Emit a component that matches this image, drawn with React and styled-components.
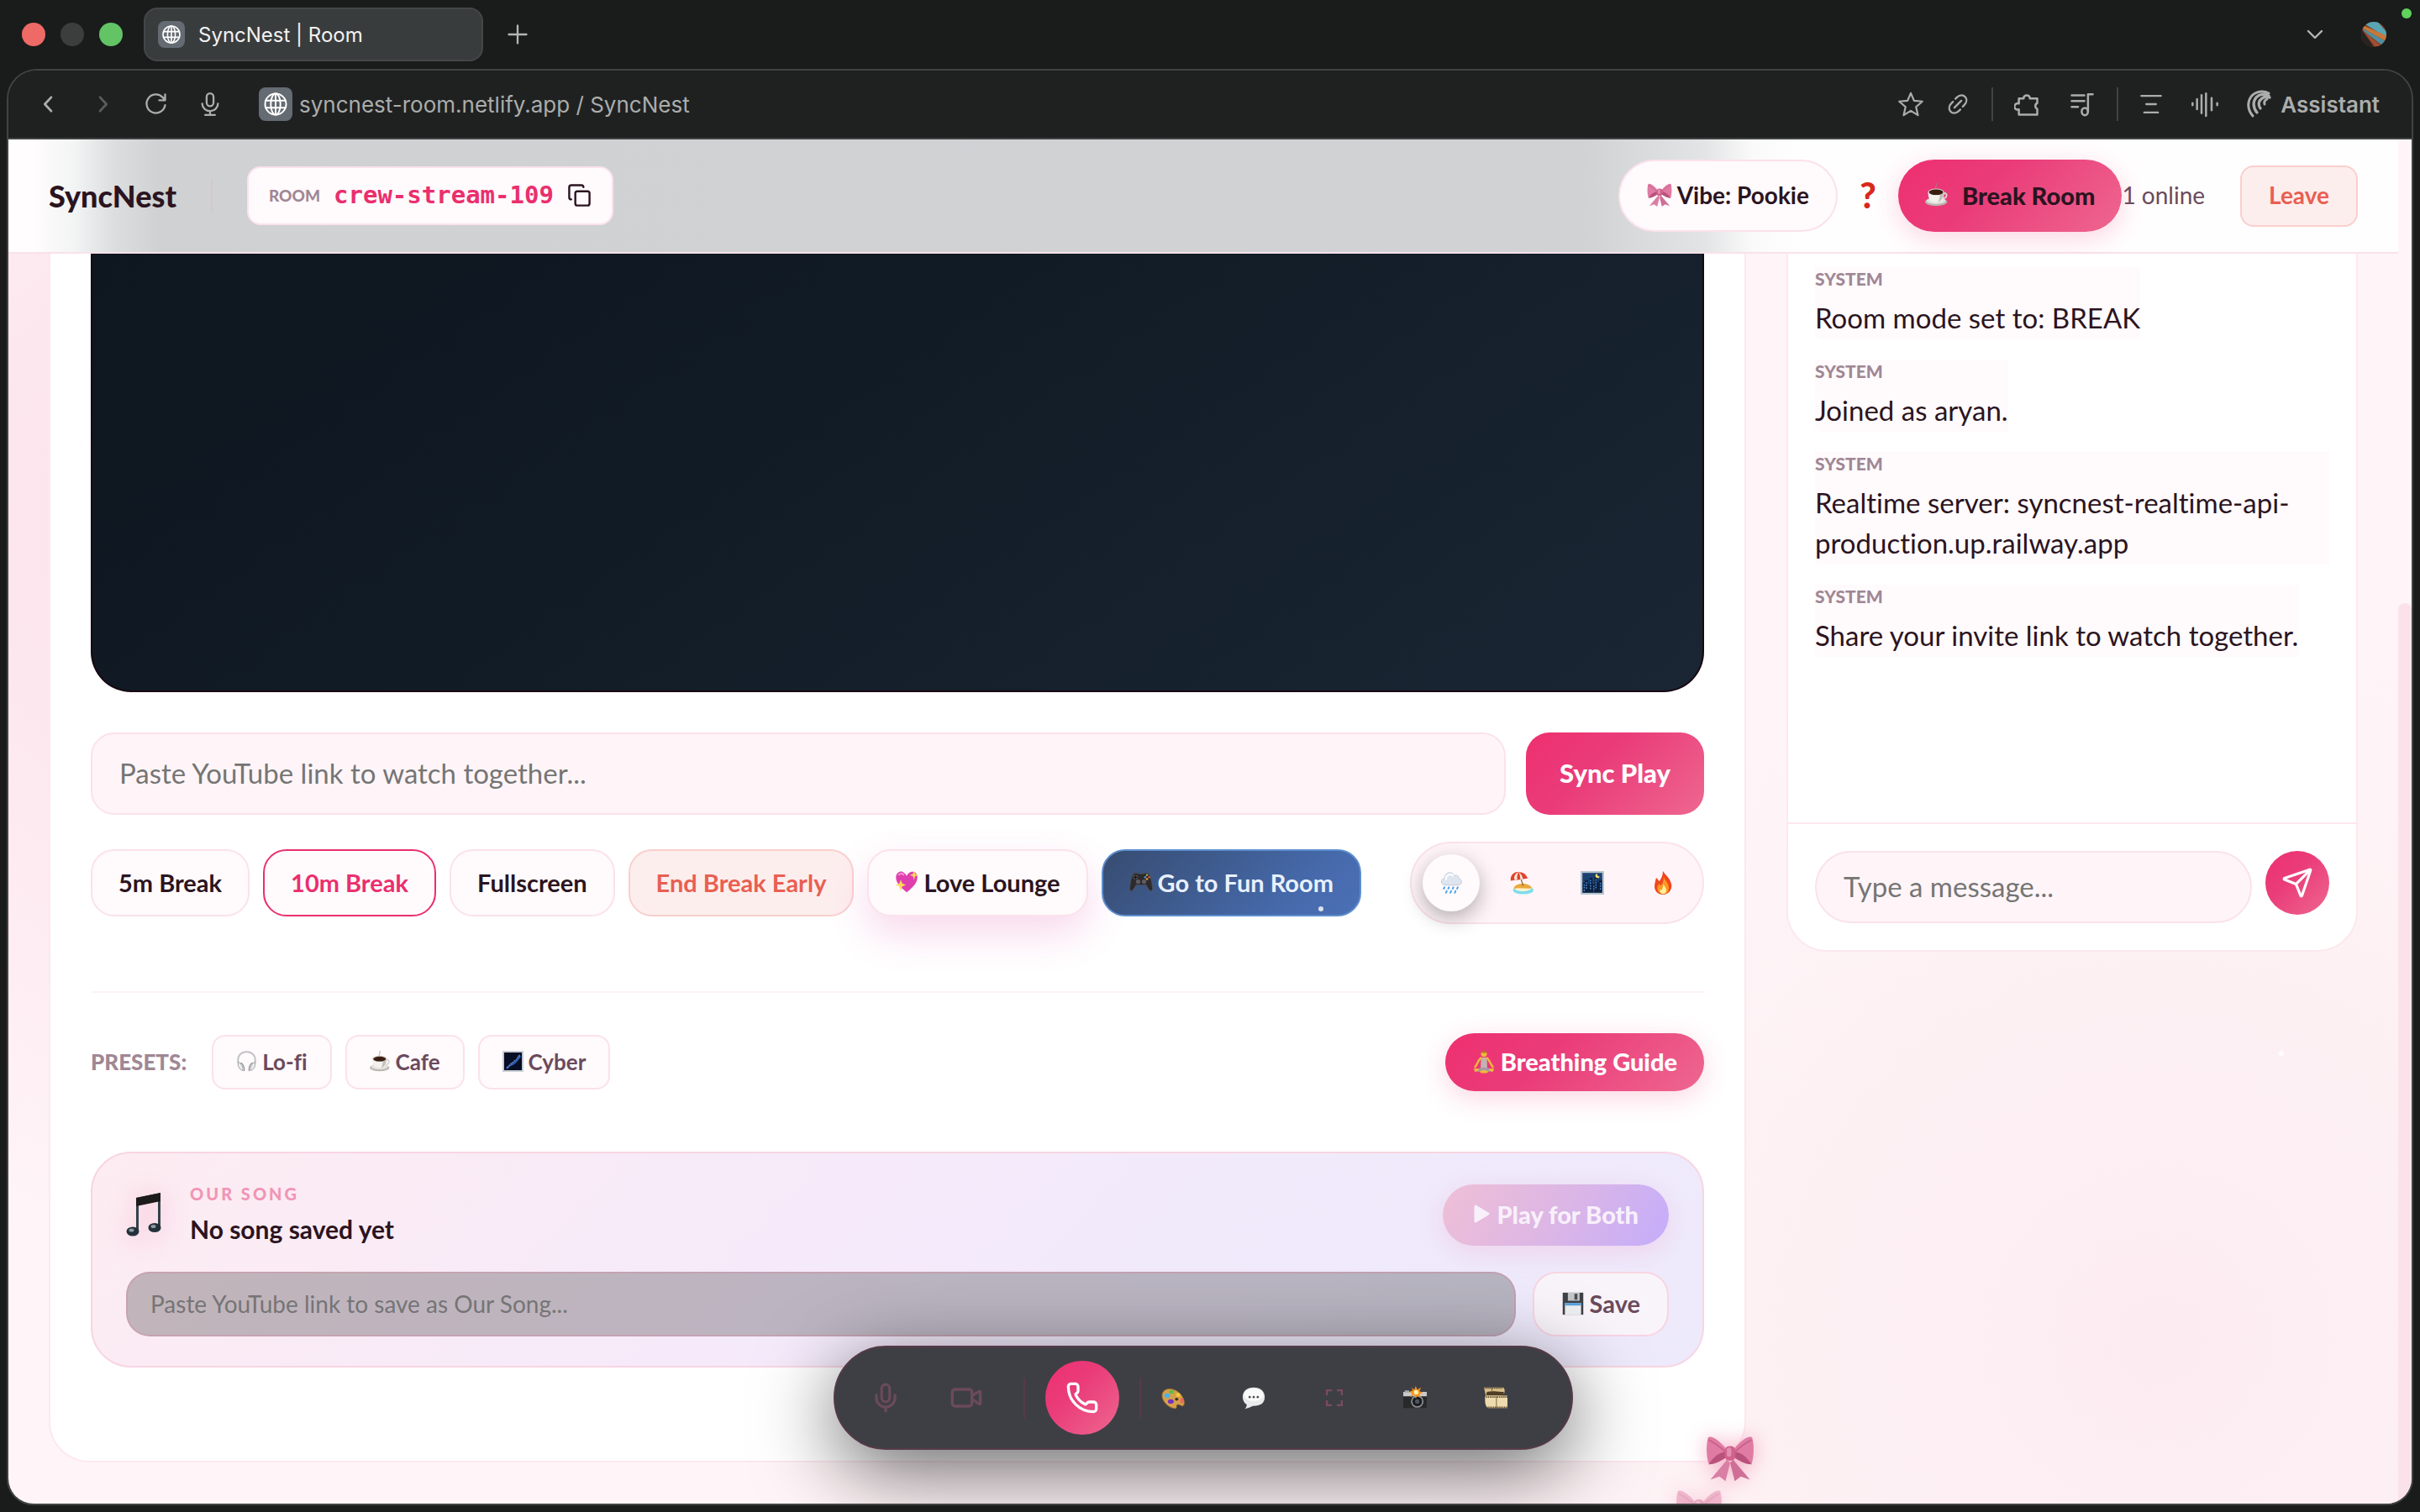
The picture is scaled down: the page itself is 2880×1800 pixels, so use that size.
import React from 'react';
import styled, { createGlobalStyle, css } from 'styled-components';
import { Mic, Video, Phone, Send, Copy } from 'lucide-react';

const ui = '"Lato", "Open Sans", sans-serif';
const chrome = '"Inter", "Liberation Sans", sans-serif';
const ink = '#2b1420';
const soft = '#6b4a5c';
const muted = '#a08794';
const pinkLine = '#fbe2ea';
const hot = 'linear-gradient(135deg, #ee2f70 0%, #ea3c79 40%, #ee6790 100%)';

const Global = createGlobalStyle`
  *, *::before, *::after { box-sizing: border-box; }
  body { margin: 0; background: #1a1c1b; font-family: ${ui}; color: ${ink}; font-variant-ligatures: none; }
  button, input { font-family: inherit; font-variant-ligatures: none; margin: 0; }
  button { cursor: pointer; border: 0; background: none; padding: 0; color: inherit; }
  h1, h2, p { margin: 0; }
`;

/* ---------- browser window ---------- */

const Desktop = styled.div`
  display: flex;
  flex-direction: column;
  height: 100vh;
  padding: 0 8px 8px;
  overflow: hidden;
`;

const TabStrip = styled.div`
  display: flex;
  align-items: center;
  flex: 0 0 82px;
  padding: 0 31px 0 18px;
  font-family: ${chrome};
`;

const Lights = styled.div`
  display: flex;
  gap: 18px;
  margin-right: 25px;
`;

const Light = styled.span`
  width: 28px;
  height: 28px;
  border-radius: 50%;
  background: ${(p) => p.$color};
`;

const Tab = styled.button`
  display: flex;
  align-items: center;
  gap: 16px;
  width: 404px;
  height: 64px;
  padding: 0 15px;
  border: 2px solid #444747;
  border-radius: 16px;
  background: #393c3d;
  color: #f2f2f2;
  font-size: 24px;
`;

const Favicon = styled.span`
  display: grid;
  place-items: center;
  width: ${(p) => p.$size}px;
  height: ${(p) => p.$size}px;
  border-radius: 8px;
  background: #646b72;
  color: #fff;
`;

const StripButton = styled.button`
  display: grid;
  place-items: center;
  width: 32px;
  height: 32px;
  color: #b4b6b5;
`;

const NewTab = styled(StripButton)`
  margin: 0 auto 0 25px;
`;

const ChevronButton = styled(StripButton)`
  margin-right: 38px;
`;

const RecordingDot = styled.span`
  position: absolute;
  top: 10px;
  right: 10px;
  width: 12px;
  height: 12px;
  border-radius: 50%;
  background: #5fd35b;
`;

const Frame = styled.div`
  display: flex;
  flex-direction: column;
  flex: 1;
  min-height: 0;
  border: 2px solid #414343;
  border-radius: 36px 36px 32px 32px;
  overflow: hidden;
`;

const Toolbar = styled.div`
  display: flex;
  align-items: center;
  flex: 0 0 82px;
  padding: 0 38px 0 34px;
  border-bottom: 2px solid #414343;
  background: #1f2121;
  color: #abadac;
  font-family: ${chrome};
  font-size: 26px;
`;

const ToolGroup = styled.div`
  display: flex;
  align-items: center;
  gap: ${(p) => p.$gap}px;
`;

const ToolButton = styled.button`
  display: grid;
  place-items: center;
  color: ${(p) => (p.$dim ? '#5b5d5d' : 'inherit')};
`;

const Address = styled.div`
  display: flex;
  align-items: center;
  gap: 8px;
  margin: 0 auto 0 44px;
`;

const ToolRule = styled.span`
  width: 2px;
  height: 40px;
  margin: 0 25px 0 26px;
  background: #414343;
`;

const AssistantButton = styled.button`
  display: flex;
  align-items: center;
  gap: 10px;
  font-size: 26px;
  font-weight: 600;
`;

/* ---------- page ---------- */

const Viewport = styled.div`
  position: relative;
  display: flex;
  flex: 1;
  min-height: 0;
`;

const Page = styled.div`
  position: relative;
  display: flex;
  flex-direction: column;
  flex: 1;
  min-width: 0;
  overflow: hidden;
  background:
    radial-gradient(circle 900px at 90% 88%, #fcecf2 0%, #fdf1f4 55%, rgba(255, 245, 248, 0) 100%),
    radial-gradient(circle 900px at 10% 28%, #fbdfe9 0%, rgba(255, 245, 248, 0) 100%),
    #fff5f8;
`;

const Scrollbar = styled.div`
  display: flex;
  flex: 0 0 16px;
  flex-direction: column;
  justify-content: flex-end;
  background: #fff5f8;
`;

const Thumb = styled.div`
  height: 66%;
  border-radius: 8px 8px 0 0;
  background: ${pinkLine};
`;

const Header = styled.header`
  display: flex;
  align-items: center;
  flex: 0 0 136px;
  padding: 10px 48px;
  border-bottom: 2px solid #f9e2ea;
  background: linear-gradient(90deg, #fffdfe 30px, #f3f4f4 78px, #dcdedf 125px, #cfd1d2 180px,
    #d0d2d4 66%, #e3e4e5 71%, #fafafa 73%, #fffefe 75%);
`;

const Logo = styled.h1`
  font-size: 36px;
  font-weight: 900;
  line-height: 40px;
`;

const HeaderRule = styled.span`
  width: 2px;
  height: 40px;
  margin: 0 41px;
  background: #d8c6cd;
`;

const RoomBox = styled.div`
  display: flex;
  align-items: center;
  gap: 16px;
  height: 70px;
  padding: 0 24px 2px;
  border: 2px solid ${pinkLine};
  border-radius: 16px;
  background: #fffafc;
`;

const RoomLabel = styled.span`
  color: ${muted};
  font-size: 19px;
  font-weight: 900;
`;

const RoomCode = styled.code`
  color: #ea2f6d;
  font: 700 29px "DejaVu Sans Mono", monospace;
`;

const HeaderEnd = styled.div`
  display: flex;
  align-items: center;
  margin-left: auto;
  font-size: 28px;
`;

const Pill = styled.button`
  display: flex;
  align-items: center;
  gap: ${(p) => (p.$hot ? 16 : 6)}px;
  height: 86px;
  padding: 0 32px 2px;
  border-radius: 43px;
  font-size: 28px;
  font-weight: 700;
  background: #fffafc;
  border: 2px solid ${pinkLine};
  ${(p) => p.$hot && css`
    border: 0;
    background: ${hot};
    font-size: 29px;
    font-weight: 900;
    box-shadow: 0 8px 32px rgba(236, 48, 112, 0.2);
  `}
`;

const Help = styled.button`
  width: 48px;
  margin: 0 12px;
  padding-bottom: 2px;
  color: #d9281c;
  font: 900 42px "Lato", sans-serif;
`;

const Online = styled.span`
  margin-right: 42px;
  padding-bottom: 2px;
  color: ${soft};
`;

const Leave = styled.button`
  height: 73px;
  padding: 0 32px 2px;
  border: 2px solid #f9cfcd;
  border-radius: 16px;
  background: #fdeeee;
  color: #e95f51;
  font-size: 28px;
  font-weight: 700;
`;

const Body = styled.div`
  display: grid;
  grid-template-columns: minmax(0, 1fr) 680px;
  align-items: start;
  gap: 48px;
  padding: 0 48px;
`;

const Panel = styled.section`
  border: 2px solid #fde8ee;
  border-top: 0;
  border-radius: 0 0 48px 48px;
  background: #fff;
`;

const Main = styled(Panel)`
  padding: 0 48px 111px;
`;

const Player = styled.div`
  height: 522px;
  border: 2px solid #180710;
  border-top: 0;
  border-radius: 0 0 48px 48px;
  background: linear-gradient(145deg, #0e161f 0%, #111b25 40%, #1a2634 100%);
`;

const LinkForm = styled.form`
  display: flex;
  gap: 24px;
  margin-top: 48px;
`;

const Field = styled.input`
  flex: 1;
  min-width: 0;
  height: 98px;
  padding: 0 32px 2px;
  border: 2px solid ${pinkLine};
  border-radius: 28px;
  background: #fff5f8;
  color: ${ink};
  font-size: 33px;
  outline: 0;
  &::placeholder { color: #757575; opacity: 1; }
`;

const SyncPlay = styled.button`
  height: 98px;
  padding: 0 40px 2px;
  border-radius: 28px;
  background: ${hot};
  color: #fff;
  font-size: 31px;
  font-weight: 900;
`;

const Controls = styled.div`
  display: flex;
  align-items: center;
  gap: 16px;
  margin-top: 32px;
`;

const tones = {
  plain: css`border-color: ${pinkLine}; background: #fffafc; color: ${ink};`,
  active: css`border-color: #ea2f6d; background: #fffafc; color: #ea2f6d;`,
  danger: css`border-color: #f9cfcd; background: #fdeeee; color: #e95f51;`,
  love: css`border-color: ${pinkLine}; background: #fffafc; color: ${ink}; box-shadow: 0 20px 48px rgba(222, 60, 160, 0.2);`,
  fun: css`border-color: #5e8fcf; background: linear-gradient(135deg, #374c70, #466aac 75%, #4c70b5); color: #e8f1ff;`,
};

const Control = styled.button`
  display: flex;
  align-items: center;
  gap: 6px;
  height: 80px;
  padding: 0 31px 2px;
  border: 2px solid;
  border-radius: 28px;
  font-size: 29px;
  font-weight: 700;
  white-space: nowrap;
  ${(p) => tones[p.$tone]}
`;

const Ambience = styled.div`
  display: flex;
  gap: 16px;
  margin-left: auto;
  padding: 13px;
  border: 2px solid ${pinkLine};
  border-radius: 49px;
  background: #fff5f8;
`;

const AmbienceButton = styled.button`
  display: grid;
  place-items: center;
  width: 68px;
  height: 68px;
  border-radius: 50%;
  ${(p) => p.$on && css`background: #fffafc; box-shadow: 0 8px 24px rgba(0, 0, 0, 0.3);`}
`;

const PresetRow = styled.div`
  display: flex;
  align-items: center;
  gap: 16px;
  margin-top: 80px;
  padding-top: 48px;
  border-top: 2px solid #fff2f6;
`;

const PresetLabel = styled.span`
  margin-right: 14px;
  padding-bottom: 2px;
  color: ${muted};
  font-size: 26px;
  font-weight: 900;
`;

const Preset = styled.button`
  display: flex;
  align-items: center;
  gap: 6px;
  height: 65px;
  padding: 0 27px 2px;
  border: 2px solid ${pinkLine};
  border-radius: 16px;
  background: #fffafc;
  color: ${soft};
  font-size: 26px;
  font-weight: 700;
`;

const Breathing = styled.button`
  display: flex;
  align-items: center;
  gap: 6px;
  height: 69px;
  margin-left: auto;
  padding: 0 32px 2px;
  border-radius: 35px;
  background: ${hot};
  box-shadow: 0 8px 32px rgba(236, 48, 112, 0.2);
  color: #fff;
  font-size: 29px;
  font-weight: 900;
`;

const SongCard = styled.div`
  display: flex;
  flex-direction: column;
  gap: 26px;
  margin-top: 72px;
  padding: 31px 40px 35px;
  border: 2px solid #f8d5e2;
  border-radius: 48px;
  background: linear-gradient(135deg, #fdecf1 0%, #f6eafa 42%, #f1eafb 65%, #edeafc 100%);
`;

const SongTop = styled.div`
  display: flex;
  align-items: center;
  gap: 32px;
`;

const NoteGlow = styled.span`
  display: grid;
  filter: drop-shadow(0 4px 16px rgba(236, 48, 112, 0.35));
`;

const SongLabel = styled.p`
  color: #f195b5;
  font-size: 20px;
  font-weight: 900;
  line-height: 34px;
  letter-spacing: 3px;
`;

const SongTitle = styled.h2`
  font-size: 30px;
  font-weight: 700;
  line-height: 50px;
`;

const PlayBoth = styled.button`
  display: flex;
  align-items: center;
  gap: 8px;
  height: 73px;
  margin-left: auto;
  padding: 0 36px 2px;
  border-radius: 37px;
  background: linear-gradient(120deg, #efbfd6, #dcb6e5 50%, #c4adfb);
  box-shadow: 0 8px 32px rgba(240, 120, 180, 0.2);
  color: #f8f0fb;
  font-size: 29px;
  font-weight: 900;
`;

const SongForm = styled.form`
  display: flex;
  gap: 20px;
`;

const SongField = styled(Field)`
  height: 77px;
  padding: 0 27px 2px;
  border-color: rgba(205, 140, 160, 0.45);
  background: rgba(0, 0, 0, 0.23);
  background-clip: border-box;
  font-size: 28px;
`;

const SaveButton = styled.button`
  display: flex;
  align-items: center;
  gap: 6px;
  height: 77px;
  padding: 0 32px 2px;
  border: 2px solid #f8d5e2;
  border-radius: 28px;
  background: #f9f4fa;
  color: ${soft};
  font-size: 29px;
  font-weight: 700;
`;

/* ---------- chat ---------- */

const Messages = styled.div`
  display: flex;
  flex-direction: column;
  align-items: flex-start;
  gap: 24px;
  height: 677px;
  padding: 16px 32px;
`;

const Message = styled.div`
  display: grid;
  gap: 8px;
  padding-bottom: 2px;
  border-radius: 0 0 0 8px;
  background: #fffafc;
`;

const Sender = styled.span`
  color: ${muted};
  font-size: 21px;
  font-weight: 900;
  line-height: 28px;
`;

const MessageText = styled.p`
  font-size: 33px;
  line-height: 48px;
`;

const ChatForm = styled.form`
  display: flex;
  align-items: flex-start;
  gap: 16px;
  padding: 32px;
  border-top: 2px solid #fde8ee;
`;

const ChatField = styled(Field)`
  height: 86px;
  border-radius: 43px;
`;

const SendButton = styled.button`
  display: grid;
  place-items: center;
  width: 76px;
  height: 76px;
  border-radius: 50%;
  background: ${hot};
  color: #fff;
`;

/* ---------- floating dock ---------- */

const Dock = styled.nav`
  position: absolute;
  bottom: 64px;
  left: 50%;
  display: flex;
  align-items: center;
  width: 880px;
  height: 124px;
  padding: 0 12px;
  border: 2px solid #563a48;
  border-radius: 62px;
  background: #3e3f44;
  box-shadow: 0 24px 96px rgba(0, 0, 0, 0.6);
  color: ${soft};
  transform: translateX(-50%);
`;

const DockButton = styled.button`
  display: grid;
  place-items: center;
  width: 96px;
  height: 80px;
`;

const DockRule = styled.span`
  width: 2px;
  height: 48px;
  background: #563a48;
  margin: 0 ${(p) => (p.$end ? 0 : 24)}px 0 ${(p) => (p.$end ? 24 : 20)}px;
`;

const HangUp = styled.button`
  display: grid;
  place-items: center;
  width: 88px;
  height: 88px;
  border-radius: 50%;
  background: ${hot};
  color: #fff;
`;

const DockEmoji = styled.div`
  display: flex;
  margin-left: -10px;
`;

const Bows = styled.div`
  position: absolute;
  right: 766px;
  bottom: -37px;
  display: flex;
  flex-direction: column;
  gap: 6px;
  filter: drop-shadow(0 0 12px rgba(236, 80, 130, 0.45));
`;

const Bow1 = styled.span`display: grid; margin-left: 36px;`;
const Bow2 = styled.span`display: grid; opacity: 0.45;`;

const Spark = styled.span`
  position: absolute;
  left: ${(p) => p.$x}%;
  top: ${(p) => p.$y}%;
  width: 6px;
  height: 6px;
  border-radius: 50%;
  background: #fff;
  opacity: 0.8;
`;

/* ---------- drawings ---------- */

const Line = ({ size = 28, w = 2, box = 24, children }) => (
  <svg width={size} height={size} viewBox={`0 0 ${box} ${box}`} fill="none" stroke="currentColor" strokeWidth={w} strokeLinecap="round" strokeLinejoin="round" aria-hidden="true">{children}</svg>
);
const Art = ({ size = 28, children, box = '0 0 32 32' }) => (
  <svg width={size} height={size} viewBox={box} aria-hidden="true">{children}</svg>
);

const Globe = ({ size, w = 1.6 }) => (
  <Line size={size} w={w}>
    <circle cx="12" cy="12" r="10" /><ellipse cx="12" cy="12" rx="4.6" ry="10" />
    <path d="M12 2v20M2.6 8.6h18.8M2.6 15.4h18.8" />
  </Line>
);
const AssistantMark = () => (
  <svg width="30" height="34" viewBox="0 0 30 34" fill="none" stroke="currentColor" strokeLinecap="round" aria-hidden="true">
    <path d="M7 31C1 24 0 15 5 8C10 2 19 0 26 4" strokeWidth="3" />
    <path d="M12 27C7 21 7 14 11 9C15 5 21 4 26 7" strokeWidth="3.4" />
    <path d="M16 22C13 18 14 13 17 11C20 8 24 8 27 9" strokeWidth="3.4" />
    <path d="M21 17C20 14 22 12 24 11" strokeWidth="3" />
  </svg>
);
const Avatar = () => (
  <svg width="32" height="32" viewBox="0 0 32 32" aria-hidden="true">
    <clipPath id="av"><circle cx="16" cy="16" r="15" /></clipPath>
    <g clipPath="url(#av)">
      <rect width="32" height="32" fill="#7d3b22" />
      <path d="M0 0H20L32 14V20L6 4Z" fill="#58a5b4" />
      <path d="M3 5L32 18V25L3 9Z" fill="#c9763a" />
      <path d="M3 9L30 24L26 29L4 12Z" fill="#4f8f9f" />
      <path d="M3 11L25 30H17Z" fill="#a34e30" />
      <path d="M0 8L17 32H0Z" fill="#262321" />
    </g>
  </svg>
);
const Bow = ({ size }) => (
  <Art size={size}>
    <path d="M14 17L3 30L9 28L13 31L16 19Z" fill="#d97fa4" />
    <path d="M18 17L29 30L23 28L19 31L16 19Z" fill="#cf6f97" />
    <path d="M13.500 10C9 4 3 .5 1.500 2.500C0 8 .5 16 2 20C6 20 11 17 14 15Z" fill="#e07ba3" />
    <path d="M18.500 10C23 4 29 .5 30.500 2.500C32 8 31.500 16 30 20C26 20 21 17 18 15Z" fill="#e07ba3" />
    <path d="M13 12C9 12 5 15 2 20C6 20 11 17 14 15ZM19 12C23 12 27 15 30 20C26 20 21 17 18 15Z" fill="#b9527a" />
    <path d="M2 4C6 6 10 9 13 12M30 4C26 6 22 9 19 12" stroke="#c4608a" strokeWidth="1" fill="none" />
    <rect x="12.500" y="8" width="7" height="9.500" rx="3" fill="#d0628d" /><rect x="13.800" y="9" width="3" height="6" rx="1.500" fill="#e58fb0" />
  </Art>
);
const Coffee = ({ size }) => (
  <Art size={size}>
    <path d="M15 8C12 5 18 4 15 0" stroke="#9a8d8a" strokeWidth="1.300" fill="none" opacity=".7" />
    <ellipse cx="15" cy="25.500" rx="15" ry="5.500" fill="#b9b6b0" /><ellipse cx="15" cy="24" rx="13" ry="4.500" fill="#e3e1dc" />
    <path d="M25 14C31 12 31 21 23 21" stroke="#d8d5cf" strokeWidth="2.200" fill="none" />
    <path d="M4 12H26C26 20 23 26 19 26H11C7 26 4 20 4 12Z" fill="#f3f1ed" /><path d="M18 26C23 24 25 18 26 12L21 14Z" fill="#c3c0ba" />
    <ellipse cx="15" cy="12" rx="11" ry="4.600" fill="#d2cfc9" /><ellipse cx="15" cy="12.400" rx="9.600" ry="3.700" fill="#3a1d12" />
  </Art>
);
const Heart = () => (
  <Art>
    <path d="M16 30C8 23 1 17 1.500 9C2 3 8 0 12 3C14 4.500 15.500 6 16 8C17 5 20 2 24 2C29 2 31 7 30.500 11C29.500 19 22 25 16 30Z" fill="#df3fae" />
    <path d="M5 7C7 3 11 4 12 7" stroke="#f79bd9" strokeWidth="2" fill="none" />
    <path d="M26 0L27.500 5L32 6.500L27.500 8L26 13L24.500 8L20 6.500L24.500 5ZM8 13L10 18L15 20L10 22L8 28L6 22L1 20L6 18Z" fill="#ffd75c" />
  </Art>
);
const Gamepad = () => (
  <Art>
    <path d="M7 4C10 3 12 5 16 5S22 3 25 4C29 6 31 18 31.500 25C31 30 27 29 23 20H9C5 29 1 30 .5 25C1 18 3 6 7 4Z" fill="#2c2a2d" stroke="#514f54" />
    <circle cx="8.500" cy="9.500" r="3.200" fill="#55535a" /><path d="M8.500 7v5M6 9.500h5" stroke="#151416" strokeWidth="1.500" />
    <circle cx="12" cy="15.500" r="3" fill="#5f5d64" /><circle cx="20" cy="15.500" r="3" fill="#5f5d64" />
    <circle cx="24" cy="6.500" r="1.500" fill="#8bb651" /><circle cx="27" cy="9.500" r="1.500" fill="#e25037" /><circle cx="21.500" cy="9.500" r="1.500" fill="#5a8ad0" /><circle cx="24" cy="12" r="1.500" fill="#e0a93a" />
  </Art>
);
const RainCloud = () => (
  <Art>
    <path d="M8 19C2 19 .5 11 7 10C7 2 17 -1 20 6C25 5 27 8 26.500 10C32 12 31 19 25 19Z" fill="#dfe5ef" stroke="#bcc6d6" />
    <path d="M9 12C8 5 16 2 19 7" stroke="#fff" strokeWidth="2.500" fill="none" />
    <path d="M7 22l-1 2M13 22l-1 2M19 22l-1 2M25 22l-1 2M10 27l-1 2.500M16 27l-1 2.500M22 27l-1 2.500" stroke="#4aa3e8" strokeWidth="2.200" strokeLinecap="round" />
  </Art>
);
const Beach = () => (
  <Art>
    <ellipse cx="18" cy="26" rx="14" ry="5.500" fill="#7fdcec" /><path d="M5 23C8 15 26 15 30 23C26 27 9 27 5 23Z" fill="#eaa83c" />
    <path d="M6 24C12 22 24 25 30 23C27 28 10 29 6 24Z" fill="#fff3cf" />
    <path d="M13 5L18 20" stroke="#8d6b4a" strokeWidth="1.500" />
    <path d="M1 13C0 5 7 0 12 1.500C19 1 23 6 24 10Z" fill="#e2432f" /><path d="M6 12C5 6 8 3 12 1.500C15 4 17 7 17.500 11Z" fill="#f9e9d5" /><path d="M10 12C9 7 10 4 12 1.500C13.500 5 14 8 14 11.500Z" fill="#e2432f" />
  </Art>
);
const City = () => (
  <Art>
    <rect x="0" y="0" width="32" height="32" fill="#b9c4cd" /><rect x="2.500" y="2.500" width="27" height="27" fill="#1c4272" />
    <path d="M3 29V16h3v-4h4v6h2V9h4v9h3V7h4v8h2v-3h4v17Z" fill="#0d1f3b" />
    <path d="M5 18v10M8 15v10M13.500 12v14M18 20v8M21 11v14M27 16v10" stroke="#4a94e6" strokeWidth="1.600" strokeDasharray="2 1.500" />
    <path d="M23 3.500a3 3 0 1 0 3 3.500a2.400 2.400 0 0 1-3-3.500" fill="#f4dd6b" />
  </Art>
);
const Fire = () => (
  <Art>
    <path d="M16 0C19 5 25 9 27 16C30 24 24 32 16 32C8 32 3 25 5 17C6 13 6 11 7 9C9 11 10 12 11 14C14 10 16 6 16 0Z" fill="#f0461e" />
    <path d="M17 8C19 13 24 16 24 23C24 29 20 31 16 31C11 31 8 27 8.500 22C9 20 10 18 10.500 17L13 20C16 17 17 13 17 8Z" fill="#fb9a22" />
    <path d="M16.500 17C18 21 21 23 20.500 27C20 30 18 31 16 31C13 31 11.500 28 12 25.500L14 26C16 23 16.500 20 16.500 17Z" fill="#fff0a0" />
  </Art>
);
const Headphones = () => (
  <Art size={25}>
    <path d="M4 20C0 9 7 1.500 16 1.500S32 9 28 20" stroke="#c0c2c5" strokeWidth="2.600" fill="none" />
    <path d="M3 17C8 19 11 25 10 30C5 29 2 23 3 17ZM29 17C24 19 21 25 22 30C27 29 30 23 29 17Z" fill="#eceded" stroke="#9b9da0" strokeWidth="1.200" />
    <path d="M7 18C11 20 13 26 12 31M25 18C21 20 19 26 20 31" stroke="#8d8f93" strokeWidth="1.600" fill="none" />
  </Art>
);
const Galaxy = () => (
  <Art size={25}>
    <rect x="0" y="0" width="32" height="32" fill="#c9d0d7" /><rect x="2.500" y="2.500" width="27" height="27" fill="#070d22" />
    <path d="M5 26C10 24 10 19 14 18S20 12 26 5L28 9C23 16 19 21 15 22S10 26 7 28Z" fill="#2b5db2" />
    <path d="M7 25L12 21L16 17L21 13L26 7" stroke="#8fb7f2" strokeWidth="1.600" strokeDasharray="1.500 2" />
  </Art>
);
const Meditate = () => (
  <Art>
    <circle cx="16" cy="5" r="4" fill="#f0b93a" /><path d="M12.500 4C12 -.5 20 -.5 19.500 4Z" fill="#b5702a" />
    <path d="M12 11C14 9.500 18 9.500 20 11L20.500 25H11.500Z" fill="#c3b3b0" />
    <path d="M12 11C9 12 8 18 4 23M20 11C23 12 24 18 28 23" stroke="#f0b93a" strokeWidth="2.800" strokeLinecap="round" fill="none" />
    <path d="M4 27C9 23 23 23 28 27C25 31 20 29 16 29S7 31 4 27Z" fill="#a898a5" /><path d="M2 25.500L8 25L9 28L4 30ZM30 25.500L24 25L23 28L28 30Z" fill="#f0b93a" /><path d="M10 29L16 27L22 29L20 31.500H12Z" fill="#f0b93a" />
  </Art>
);
const Notes = () => (
  <svg width="44" height="54" viewBox="0 0 44 54" aria-hidden="true">
    <path d="M12 7L41 1V43H38V11L15 16V47H12Z" fill="#33424c" /><path d="M12 7L41 1V11L12 17Z" fill="#1d1a1b" />
    <ellipse cx="8" cy="47" rx="7.500" ry="5.500" fill="#23313b" /><ellipse cx="34" cy="42.500" rx="7.500" ry="5.500" fill="#23313b" />
    <ellipse cx="6.500" cy="45.500" rx="3" ry="2" fill="#8d9aa3" /><ellipse cx="32.500" cy="41" rx="3" ry="2" fill="#8d9aa3" />
  </svg>
);
const Floppy = () => (
  <Art>
    <path d="M2 1H30V31H2Z" fill="#3f4246" /><rect x="9" y="1" width="16" height="11" fill="#c3c6c9" /><rect x="18" y="2.500" width="4" height="8" fill="#4a4d51" />
    <rect x="5" y="15" width="22" height="16" fill="#eceef0" /><rect x="5" y="15" width="22" height="3.500" fill="#5ba1de" />
  </Art>
);
const Palette = () => (
  <Art>
    <path d="M2 9C6 1 20 3 27 12C33 20 32 28 28 27C25 26 23 24 21 26C20 28 22 30 19 30.500C9 30 -2 18 2 9Z" fill="#d7a04b" stroke="#a36f2c" />
    <ellipse cx="8" cy="13" rx="4" ry="3" fill="#4db2e8" /><ellipse cx="14" cy="8" rx="3.500" ry="2.500" fill="#5cc04a" /><ellipse cx="23" cy="12" rx="3" ry="2.500" fill="#f0c93c" /><ellipse cx="13" cy="21" rx="4" ry="3" fill="#7333c4" /><ellipse cx="28" cy="20" rx="2.500" ry="3.500" fill="#ea6a5a" /><ellipse cx="21" cy="18" rx="2.400" ry="2" fill="#3c3327" />
  </Art>
);
const Bubble = () => (
  <Art>
    <path d="M16 2C25 2 31 7 31 15S25 27 16 27C13 27 10 30 4 31C6 29 6.500 27 6.500 25C3 23 1 19 1 15C1 7 7 2 16 2Z" fill="#e9eaec" /><ellipse cx="16" cy="12" rx="13" ry="8.500" fill="#fafafa" />
    <circle cx="10.500" cy="15" r="1.500" fill="#4b4d50" /><circle cx="16" cy="15" r="1.500" fill="#4b4d50" /><circle cx="21.500" cy="15" r="1.500" fill="#4b4d50" />
  </Art>
);
const Corners = () => (
  <svg width="20" height="20" viewBox="0 0 20 20" fill="none" stroke="#7a4b60" strokeWidth="2.400" aria-hidden="true"><path d="M1 7V1H7M13 1H19V7M19 13V19H13M7 19H1V13" /></svg>
);
const Camera = () => (
  <Art>
    <rect x="0" y="8" width="32" height="22" rx="1.500" fill="#28292b" /><rect x="0" y="8" width="32" height="6" fill="#c9cacc" /><rect x="2" y="6" width="6" height="3" fill="#a9aaac" />
    <circle cx="19" cy="21" r="8.500" fill="#8b8e92" /><circle cx="19" cy="21" r="6.500" fill="#1a1b1d" /><circle cx="19" cy="21" r="3" fill="#4b5560" />
    <path d="M17 0L19 5L24 2L22 7L27 9L22 11L24 15L19 13L17 17L15 12L10 15L12 10L8 8L13 6L11 2L15 5Z" fill="#f8961d" /><circle cx="17.500" cy="8.500" r="3" fill="#fff1a8" />
  </Art>
);
const Film = () => (
  <Art>
    <path d="M0 2H26C30 5 28 11 25 13L3 15Z" fill="#d8bf8a" /><path d="M1 3H26" stroke="#5a4426" strokeWidth="1.500" strokeDasharray="1.500 1" />
    <path d="M4 8C12 6 22 8 27 8V13H3Z" fill="#4f3d24" /><path d="M2 13H32V30H5C1 26 1 18 2 13Z" fill="#eddbae" />
    <path d="M3 15H32M5 29H32" stroke="#5a4426" strokeWidth="2" strokeDasharray="1.500 1" /><path d="M17 14V30M11 3V7" stroke="#6b5330" />
  </Art>
);

const ambience = [['Rain', RainCloud], ['Beach', Beach], ['City', City], ['Fire', Fire]];
const messages = ['Room mode set to: BREAK', 'Joined as aryan.', 'Realtime server: syncnest-realtime-api-production.up.railway.app', 'Share your invite link to watch together.'];
const dockTools = [['Theme', Palette], ['Chat', Bubble], ['Fullscreen', Corners], ['Snapshot', Camera], ['Memories', Film]];
const stay = (e) => e.preventDefault();

const Browser = ({ children }) => (
  <Desktop>
    <TabStrip>
      <Lights><Light $color="#ee6a66" /><Light $color="#3c3e3e" /><Light $color="#63c466" /></Lights>
      <Tab><Favicon $size={32}><Globe size={24} /></Favicon>SyncNest | Room</Tab>
      <NewTab aria-label="New tab"><Line size={28} w={2}><path d="M12 3v18M3 12h18" /></Line></NewTab>
      <ChevronButton aria-label="Tab list"><Line size={24} w={2.4}><path d="M4 8l8 8l8-8" /></Line></ChevronButton>
      <StripButton aria-label="Profile"><Avatar /></StripButton>
      <RecordingDot />
    </TabStrip>
    <Frame>
      <Toolbar>
        <ToolGroup $gap={36}>
          <ToolButton aria-label="Back"><Line w={2.4}><path d="M14.500 5L8 12l6.500 7" /></Line></ToolButton>
          <ToolButton aria-label="Forward" $dim><Line w={2.4}><path d="M9.500 5L16 12l-6.500 7" /></Line></ToolButton>
          <ToolButton aria-label="Reload"><Line><path d="M21 13A9.500 9.500 0 1 1 18.500 5L21 8M21 2v6h-6" /></Line></ToolButton>
          <ToolButton aria-label="Voice"><Line><rect x="8.500" y="1" width="7" height="13" rx="3.500" /><path d="M4 11.500a8 7.500 0 0 0 16 0M12 19v3.500M7 23h10" /></Line></ToolButton>
        </ToolGroup>
        <Address><Favicon $size={40}><Globe size={30} /></Favicon>syncnest-room.netlify.app / SyncNest</Address>
        <ToolGroup $gap={27}>
          <ToolButton aria-label="Bookmark"><Line size={30} w={1.8}><path d="M12 1.500l3.100 7.200 7.900.7-6 5.200 1.800 7.900L12 18.300 5.200 22.500 7 14.600 1 9.400l7.900-.7z" /></Line></ToolButton>
          <ToolButton aria-label="Copy link"><Line size={28}><path d="M7 9.500L5.500 11C-.5 17 6.500 25 13 19L14.500 17.500M9.500 6.500L11 5C17.500 -1 24.500 7 18.500 13L17 14.500M8.500 15.500L15.500 8.500" /></Line></ToolButton>
        </ToolGroup>
        <ToolRule />
        <ToolGroup $gap={36}>
          <ToolButton aria-label="Extensions"><Line size={30}><path d="M4.500 6.500H9A3 3 0 1 1 15 6.500H22V11A3 3 0 0 0 22 16.500V22H4.500V17A3 3 0 1 1 4.500 11.500Z" /></Line></ToolButton>
          <ToolButton aria-label="Media"><Line size={30}><path d="M2 3.500h12M2 9h12M2 14.500h6M17.500 19V2.500H22" /><ellipse cx="14.500" cy="19" rx="3" ry="3.500" /></Line></ToolButton>
        </ToolGroup>
        <ToolRule />
        <ToolGroup $gap={34}>
          <ToolButton aria-label="Reader"><Line size={28}><path d="M2 3.500h20M7 12h10M5 20.500h14" /></Line></ToolButton>
          <ToolButton aria-label="Voice mode"><Line size={32} w={1.900}><path d="M1 11v2M5 7.500v9M9 4v16M13 2.500v20M18 6.500v11M23 11v2" /></Line></ToolButton>
          <AssistantButton><AssistantMark />Assistant</AssistantButton>
        </ToolGroup>
      </Toolbar>
      {children}
    </Frame>
  </Desktop>
);

const TopBar = () => (
  <Header>
    <Logo>SyncNest</Logo>
    <HeaderRule />
    <RoomBox>
      <RoomLabel>ROOM</RoomLabel>
      <RoomCode>crew-stream-109</RoomCode>
      <ToolButton aria-label="Copy room code"><Copy size={29} strokeWidth={2} /></ToolButton>
    </RoomBox>
    <HeaderEnd>
      <Pill><Bow size={30} />Vibe: Pookie</Pill>
      <Help>?</Help>
      <Pill $hot><Coffee size={28} />Break Room</Pill>
      <Online>1 online</Online>
      <Leave>Leave</Leave>
    </HeaderEnd>
  </Header>
);

const WatchPanel = () => (
  <Main>
    <Player />
    <LinkForm onSubmit={stay}>
      <Field aria-label="YouTube link" placeholder="Paste YouTube link to watch together..." />
      <SyncPlay>Sync Play</SyncPlay>
    </LinkForm>
    <Controls>
      <Control $tone="plain">5m Break</Control>
      <Control $tone="active">10m Break</Control>
      <Control $tone="plain">Fullscreen</Control>
      <Control $tone="danger">End Break Early</Control>
      <Control $tone="love"><Heart />Love Lounge</Control>
      <Control $tone="fun"><Gamepad />Go to Fun Room</Control>
      <Ambience>
        {ambience.map(([name, Icon], i) => <AmbienceButton key={name} aria-label={name} $on={i === 0}><Icon /></AmbienceButton>)}
      </Ambience>
    </Controls>
    <PresetRow>
      <PresetLabel>PRESETS:</PresetLabel>
      <Preset><Headphones />Lo-fi</Preset>
      <Preset><Coffee size={25} />Cafe</Preset>
      <Preset><Galaxy />Cyber</Preset>
      <Breathing><Meditate />Breathing Guide</Breathing>
    </PresetRow>
    <SongCard>
      <SongTop>
        <NoteGlow><Notes /></NoteGlow>
        <div>
          <SongLabel>OUR SONG</SongLabel>
          <SongTitle>No song saved yet</SongTitle>
        </div>
        <PlayBoth>
          <svg width="20" height="22" viewBox="0 0 20 22" aria-hidden="true"><path d="M3 2L18 11L3 20Z" fill="currentColor" stroke="currentColor" strokeWidth="3" strokeLinejoin="round" /></svg>
          Play for Both
        </PlayBoth>
      </SongTop>
      <SongForm onSubmit={stay}>
        <SongField aria-label="Our Song link" placeholder="Paste YouTube link to save as Our Song..." />
        <SaveButton><Floppy />Save</SaveButton>
      </SongForm>
    </SongCard>
  </Main>
);

const ChatPanel = () => (
  <Panel>
    <Messages>
      {messages.map((text) => <Message key={text}><Sender>SYSTEM</Sender><MessageText>{text}</MessageText></Message>)}
    </Messages>
    <ChatForm onSubmit={stay}>
      <ChatField aria-label="Message" placeholder="Type a message..." />
      <SendButton aria-label="Send"><Send size={38} /></SendButton>
    </ChatForm>
  </Panel>
);

const CallDock = () => (
  <Dock>
    <DockButton aria-label="Microphone"><Mic size={38} /></DockButton>
    <DockButton aria-label="Camera"><Video size={40} /></DockButton>
    <DockRule />
    <HangUp aria-label="Call"><Phone size={40} /></HangUp>
    <DockRule $end />
    <DockEmoji>
      {dockTools.map(([name, Icon]) => <DockButton key={name} aria-label={name}><Icon /></DockButton>)}
    </DockEmoji>
  </Dock>
);

export default function App() {
  return (
    <>
      <Global />
      <Browser>
        <Viewport>
          <Page>
            <TopBar />
            <Body>
              <WatchPanel />
              <ChatPanel />
            </Body>
            <Bows><Bow1><Bow size={58} /></Bow1><Bow2><Bow size={56} /></Bow2></Bows>
            <Spark $x={54.8} $y={56.2} />
            <Spark $x={95} $y={66.8} />
            <CallDock />
          </Page>
          <Scrollbar><Thumb /></Scrollbar>
        </Viewport>
      </Browser>
    </>
  );
}
